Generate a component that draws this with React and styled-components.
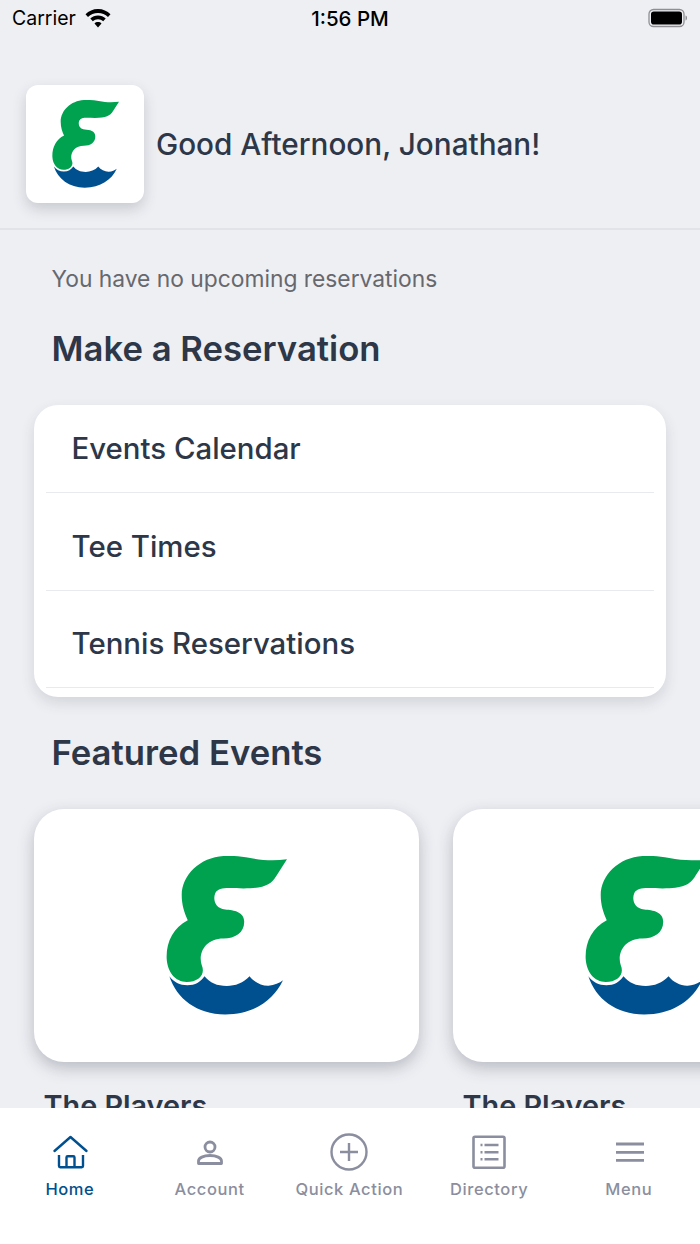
import styled, { createGlobalStyle } from "styled-components";

const GlobalStyle = createGlobalStyle`
  * { box-sizing: border-box; }
  html, body { margin: 0; padding: 0; background: #eeeff3; }
  body { font-family: "Inter", "Liberation Sans", sans-serif; }
`;

const Screen = styled.div`
  width: 700px;
  height: 1244px;
  display: flex;
  flex-direction: column;
  overflow: hidden;
  background: #eeeff3;
  color: #2d3748;
`;

// Status bar
const StatusBar = styled.div`
  height: 40px;
  flex: none;
  padding: 0 12px;
  display: grid;
  grid-template-columns: 1fr auto 1fr;
  align-items: center;
  color: #000;
  font-size: 19.5px;
`;

const StatusLeft = styled.div`
  display: flex;
  align-items: center;
  gap: 9px;
  margin-top: -4px;
`;

const Clock = styled.div`
  font-size: 20.5px;
  font-weight: 500;
  margin-top: -4px;
`;

const StatusRight = styled.div`
  display: flex;
  justify-content: flex-end;
  margin-top: -5px;
`;

// Greeting header
const Header = styled.div`
  flex: none;
  height: 190px;
  padding: 45px 26px 0;
  display: flex;
  align-items: flex-start;
  gap: 12px;
  border-bottom: 2px solid #e1e3e8;
`;

const LogoTile = styled.div`
  width: 118px;
  height: 118px;
  flex: none;
  display: flex;
  align-items: center;
  justify-content: center;
  background: #fff;
  border-radius: 12px;
  box-shadow: 0 6px 14px rgba(45, 55, 72, 0.2);
`;

const Greeting = styled.div`
  height: 118px;
  display: flex;
  align-items: center;
  font-size: 29.7px;
  font-weight: 500;
`;

const Content = styled.div`
  flex: 1;
  min-height: 0;
  overflow: hidden;
  padding: 33px 34px 0;
`;

const Notice = styled.div`
  padding-left: 17.5px;
  font-size: 22.8px;
  line-height: 32px;
  color: #66686e;
`;

const SectionTitle = styled.h2`
  margin: ${(props) => props.$top}px 0 0;
  padding-left: 17.5px;
  font-size: 34.7px;
  line-height: 44px;
  font-weight: 600;
`;

// Reservation list
const ListCard = styled.div`
  margin-top: 35px;
  height: 292px;
  padding: 0 12px;
  background: #fff;
  border-radius: 24px;
  box-shadow: 0 6px 14px rgba(45, 55, 72, 0.14);
`;

const ListRow = styled.div`
  height: 97.5px;
  padding: 10px 0 0 25.5px;
  display: flex;
  align-items: center;
  font-size: 29.4px;
  font-weight: 500;
  border-bottom: 1px solid #e9eaee;

  &:first-child {
    height: 88px;
    padding-top: 0;
    padding-bottom: 1px;
  }
`;

// Featured events
const EventStrip = styled.div`
  margin-top: 35px;
  display: flex;
  gap: 34px;
  width: 900px;
`;

const EventItem = styled.div`
  width: 385px;
  flex: none;
`;

const EventCard = styled.div`
  height: 253px;
  display: flex;
  align-items: center;
  justify-content: center;
  background: #fff;
  border-radius: 30px;
  box-shadow: 0 6px 16px rgba(45, 55, 72, 0.28);
`;

const EventName = styled.div`
  margin-top: 26px;
  padding-left: 9.5px;
  font-size: 28.8px;
  line-height: 36px;
  font-weight: 600;
`;

// Bottom tabs
const TabBar = styled.div`
  flex: none;
  height: 136px;
  padding-top: 25px;
  display: grid;
  grid-template-columns: repeat(5, 139.75px);
  background: #fff;
`;

const Tab = styled.div`
  display: flex;
  flex-direction: column;
  align-items: center;
  color: ${(props) => (props.$active ? "#00508f" : "#8b8e9e")};
`;

const TabIcon = styled.svg`
  width: 38px;
  height: 38px;
  display: block;
  fill: none;
  stroke: currentColor;
  stroke-width: 2.4;
`;

const TabLabel = styled.div`
  margin-top: 7px;
  font-size: 16.5px;
  line-height: 22px;
  font-weight: 500;
  letter-spacing: 0.6px;
`;

function Logo({ width }) {
  return (
    <svg width={width} viewBox="48 48 362 474" style={{ display: "block", flex: "none" }}>
      <path
        fill="#00a14f"
        d="M410 58C375 62 340 62 300 54C270 48 245 47 220 48C150 52 95 105 95 165C95 195 103 218 113 240C70 262 48 305 50 355C52 395 75 425 110 425C145 425 167 402 155 375C143 340 165 295 220 295C255 295 282 278 282 245C282 215 252 210 225 208C195 205 188 178 195 160C205 138 240 145 280 145C340 145 362 135 378 108Z"
      />
      <path
        fill="#00508f"
        d="M58 408C70 425 90 435 112 435C135 435 152 425 163 408C180 428 200 437 230 437C255 437 280 428 298 408C312 426 335 437 355 436C372 435 388 428 398 420C370 480 310 522 225 522C140 522 80 475 58 408Z"
      />
    </svg>
  );
}

const tabs = [
  {
    label: "Home",
    active: true,
    icon: (
      <>
        <path d="M3.500 18 19.500 4 35.500 18" strokeLinecap="round" strokeLinejoin="round" />
        <path d="M8 22v11c0 .8.400 1.200 1.200 1.200h21.600c.8 0 1.200-.4 1.200-1.200V22" />
        <path d="M15.500 34V24.500c0-.8.400-1.200 1.200-1.200h5.600c.8 0 1.200.4 1.200 1.200V34" />
      </>
    ),
  },
  {
    label: "Account",
    icon: (
      <>
        <circle cx="19" cy="14" r="5" strokeWidth="2.800" />
        <path d="M7.500 30.500v-2.500c0-3 5-5.500 11.500-5.500s11.500 2.500 11.500 5.500v2.500Z" strokeWidth="2.800" strokeLinejoin="round" />
      </>
    ),
  },
  {
    label: "Quick Action",
    icon: (
      <>
        <circle cx="19" cy="19" r="17.500" />
        <path d="M19 10v18M10 19h18" />
      </>
    ),
  },
  {
    label: "Directory",
    icon: (
      <>
        <rect x="3.500" y="3.700" width="31" height="31" rx="1.500" strokeWidth="2.600" />
        <path d="M14.500 12h14M14.500 19.300h14M14.500 26.300h14" />
        <path d="M10.500 12h2M10.500 19.300h2M10.500 26.300h2" />
      </>
    ),
  },
  {
    label: "Menu",
    icon: <path d="M6 11h28M6 19.300h28M6 27.300h28" strokeWidth="2.800" />,
  },
];

function App() {
  return (
    <Screen>
      <GlobalStyle />
      <StatusBar>
        <StatusLeft>
          Carrier
          <svg width="26" height="19" viewBox="0 0 26 19">
            <path d="M13 0C8 0 3.800 2 .5 5.200L3 8c2.700-2.600 6-4.100 10-4.100S20.300 5.400 23 8l2.500-2.800C22.200 2 18 0 13 0Z" />
            <path d="M13 6.500c-3 0-5.600 1.100-7.700 3.100l2.500 2.700c1.400-1.300 3.200-2.100 5.200-2.100s3.800.8 5.200 2.100l2.500-2.700C18.600 7.600 16 6.500 13 6.500Z" />
            <path d="M13 13c-1.400 0-2.600.5-3.500 1.400L13 18.500l3.500-4.100C15.600 13.500 14.400 13 13 13Z" />
          </svg>
        </StatusLeft>
        <Clock>1:56 PM</Clock>
        <StatusRight>
          <svg width="40" height="20" viewBox="0 0 40 20">
            <rect x="1" y="1.500" width="35" height="17" rx="4.500" fill="none" stroke="#8e8e93" strokeWidth="1.300" />
            <rect x="3" y="3.500" width="31" height="13" rx="2.800" fill="#000" />
            <path d="M37.500 7.500c1 .3 1.500 1.200 1.500 2.500s-.5 2.200-1.500 2.500Z" fill="#8e8e93" />
          </svg>
        </StatusRight>
      </StatusBar>

      <Header>
        <LogoTile>
          <Logo width={67} />
        </LogoTile>
        <Greeting>Good Afternoon, Jonathan!</Greeting>
      </Header>

      <Content>
        <Notice>You have no upcoming reservations</Notice>
        <SectionTitle $top={31}>Make a Reservation</SectionTitle>
        <ListCard>
          <ListRow>Events Calendar</ListRow>
          <ListRow>Tee Times</ListRow>
          <ListRow>Tennis Reservations</ListRow>
        </ListCard>
        <SectionTitle $top={33}>Featured Events</SectionTitle>
        <EventStrip>
          <EventItem>
            <EventCard>
              <Logo width={121} />
            </EventCard>
            <EventName>The Players</EventName>
          </EventItem>
          <EventItem>
            <EventCard>
              <Logo width={121} />
            </EventCard>
            <EventName>The Players</EventName>
          </EventItem>
        </EventStrip>
      </Content>

      <TabBar>
        {tabs.map((tab) => (
          <Tab key={tab.label} $active={tab.active}>
            <TabIcon viewBox="0 0 38 38">{tab.icon}</TabIcon>
            <TabLabel>{tab.label}</TabLabel>
          </Tab>
        ))}
      </TabBar>
    </Screen>
  );
}

export default App;
